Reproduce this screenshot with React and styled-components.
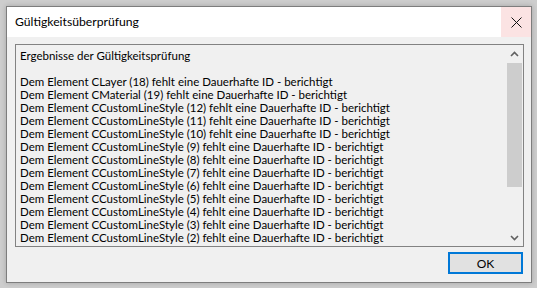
import React from "react";
import styled, { createGlobalStyle } from "styled-components";

const GlobalStyle = createGlobalStyle`
  html, body { margin: 0; padding: 0; }
  body {
    background: #cdcdcd;
    font-family: Lato, "Open Sans", sans-serif;
    font-size: 11.5px;
    color: #000;
  }
`;

const Screen = styled.div`
  box-sizing: border-box;
  width: 537px;
  height: 288px;
  padding: 6px 5px 5px 6px;
`;

const Window = styled.div`
  box-sizing: border-box;
  width: 526px;
  height: 277px;
  border: 1px solid #7d7d7d;
  background: #f0f0f0;
  display: flex;
  flex-direction: column;
  box-shadow: 0 0 5px rgba(0, 0, 0, 0.2);
`;

const TitleBar = styled.div`
  height: 30px;
  background: #fff;
  display: flex;
  align-items: center;
  justify-content: space-between;
  flex-shrink: 0;
`;

const Title = styled.span`
  padding-left: 8px;
  font-size: 12.2px;
  line-height: 16px;
`;

const CloseButton = styled.div`
  width: 30px;
  height: 30px;
  background: #fbe3e3;
  display: flex;
  align-items: center;
  justify-content: center;
`;

const Body = styled.div`
  flex: 1;
  display: flex;
  flex-direction: column;
  padding: 7px 7px 8px 8px;
`;

const ListBox = styled.div`
  box-sizing: border-box;
  height: 203px;
  border: 1px solid #828282;
  display: flex;
  background: #f0f0f0;
`;

const ListContent = styled.div`
  flex: 1;
  padding: 4px 0 0 4px;
  overflow: hidden;
`;

const Line = styled.div`
  height: 13px;
  line-height: 13px;
  white-space: nowrap;
`;

const ScrollBar = styled.div`
  width: 17px;
  display: flex;
  flex-direction: column;
  background: #f0f0f0;
`;

const ArrowBox = styled.div`
  height: 17px;
  display: flex;
  align-items: center;
  justify-content: center;
  flex-shrink: 0;
`;

const Track = styled.div`
  flex: 1;
  padding: 1px 1px 0 1px;
`;

const Thumb = styled.div`
  height: 124px;
  background: #cdcdcd;
`;

const Footer = styled.div`
  display: flex;
  justify-content: flex-end;
  margin-top: 5px;
  padding-right: 1px;
`;

const Button = styled.button`
  box-sizing: border-box;
  width: 75px;
  height: 22px;
  border: 2px solid #0078d7;
  background: #e1e1e1;
  font-family: inherit;
  font-size: 12px;
  color: #000;
  padding: 0;
`;

const Chevron = ({ up }) => (
  <svg width="9" height="6" viewBox="0 0 9 6">
    <path
      d={up ? "M1 5 L4.5 1.5 L8 5" : "M1 1 L4.5 4.5 L8 1"}
      fill="none"
      stroke="#606060"
      strokeWidth="1.6"
    />
  </svg>
);

const lines = [
  "Ergebnisse der Gültigkeitsprüfung",
  "",
  "Dem Element CLayer (18) fehlt eine Dauerhafte ID - berichtigt",
  "Dem Element CMaterial (19) fehlt eine Dauerhafte ID - berichtigt",
  "Dem Element CCustomLineStyle (12) fehlt eine Dauerhafte ID - berichtigt",
  "Dem Element CCustomLineStyle (11) fehlt eine Dauerhafte ID - berichtigt",
  "Dem Element CCustomLineStyle (10) fehlt eine Dauerhafte ID - berichtigt",
  "Dem Element CCustomLineStyle (9) fehlt eine Dauerhafte ID - berichtigt",
  "Dem Element CCustomLineStyle (8) fehlt eine Dauerhafte ID - berichtigt",
  "Dem Element CCustomLineStyle (7) fehlt eine Dauerhafte ID - berichtigt",
  "Dem Element CCustomLineStyle (6) fehlt eine Dauerhafte ID - berichtigt",
  "Dem Element CCustomLineStyle (5) fehlt eine Dauerhafte ID - berichtigt",
  "Dem Element CCustomLineStyle (4) fehlt eine Dauerhafte ID - berichtigt",
  "Dem Element CCustomLineStyle (3) fehlt eine Dauerhafte ID - berichtigt",
  "Dem Element CCustomLineStyle (2) fehlt eine Dauerhafte ID - berichtigt",
];

export default function App() {
  return (
    <>
      <GlobalStyle />
      <Screen>
        <Window>
          <TitleBar>
            <Title>Gültigkeitsüberprüfung</Title>
            <CloseButton>
              <svg width="11" height="11" viewBox="0 0 11 11">
                <path d="M0.5 0.5 L10.5 10.5 M10.5 0.5 L0.5 10.5" stroke="#111" strokeWidth="1" />
              </svg>
            </CloseButton>
          </TitleBar>
          <Body>
            <ListBox>
              <ListContent>
                {lines.map((l, i) => (
                  <Line key={i}>{l || "\u00a0"}</Line>
                ))}
              </ListContent>
              <ScrollBar>
                <ArrowBox>
                  <Chevron up />
                </ArrowBox>
                <Track>
                  <Thumb />
                </Track>
                <ArrowBox>
                  <Chevron />
                </ArrowBox>
              </ScrollBar>
            </ListBox>
            <Footer>
              <Button>OK</Button>
            </Footer>
          </Body>
        </Window>
      </Screen>
    </>
  );
}
